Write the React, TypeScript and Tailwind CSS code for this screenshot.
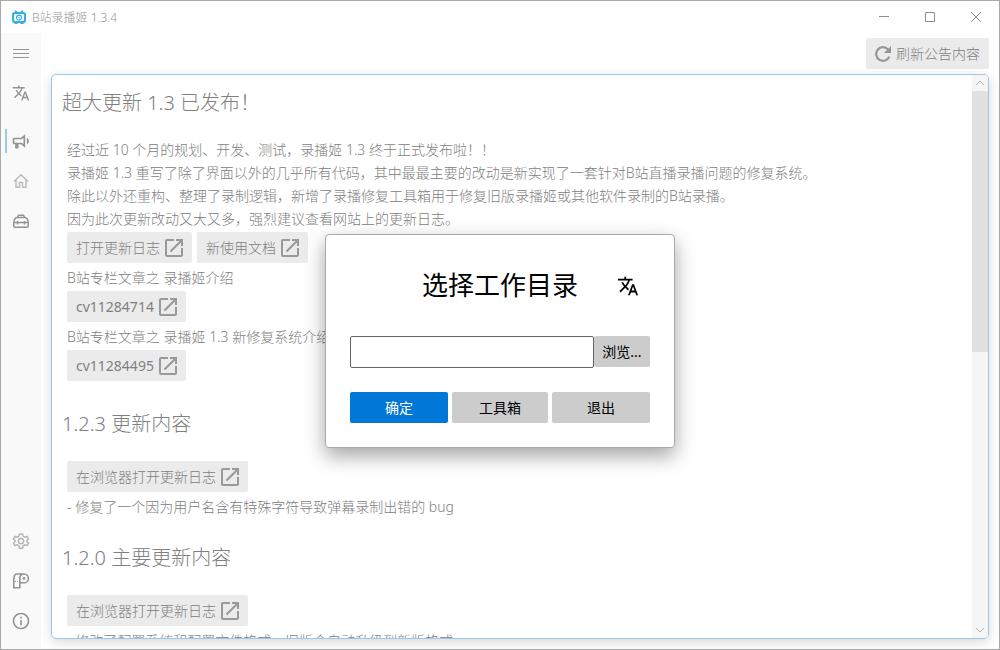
import type { ReactNode } from 'react';
import { MdOpenInNew, MdTranslate } from 'react-icons/md';

function Glyph({ d, className }: { d: string; className?: string }) {
  return (
    <svg viewBox="0 0 24 24" fill="currentColor" className={className ?? 'size-5'} aria-hidden="true">
      <path d={d} />
    </svg>
  );
}

const BULLHORN =
  'M12,8H4A2,2 0 0,0 2,10V14A2,2 0 0,0 4,16H5V20A1,1 0 0,0 6,21H8A1,1 0 0,0 9,20V16H12L17,20V4L12,8M15,15.6L13,14H4V10H13L15,8.4V15.6M21.5,12C21.5,13.71 20.54,15.26 19,16V8C20.53,8.75 21.5,10.3 21.5,12Z';
const INFO =
  'M11,9H13V7H11M12,20C7.59,20 4,16.41 4,12C4,7.59 7.59,4 12,4C16.41,4 20,7.59 20,12C20,16.41 16.41,20 12,20M12,2A10,10 0 0,0 2,12A10,10 0 0,0 12,22A10,10 0 0,0 22,12A10,10 0 0,0 12,2M11,17H13V11H11V17Z';

function Logo() {
  return (
    <svg viewBox="0 0 16 14" className="h-[14px] w-4" fill="none" stroke="#36ade6" aria-hidden="true">
      <rect x="2" y="3" width="12" height="9" rx="2" strokeWidth="2.2" />
      <path d="M4.5 1l2 1.8M11.5 1l-2 1.8M4 13.2h2M10 13.2h2" strokeWidth="1.5" strokeLinecap="round" />
      <circle cx="8" cy="7.6" r="2.5" strokeWidth="1.1" />
      <path d="M6.6 6.6l1.4 1.2h1" strokeWidth=".9" />
    </svg>
  );
}

function NavButton({ label, active, children }: { label: string; active?: boolean; children: ReactNode }) {
  return (
    <button type="button" aria-label={label} className="relative flex h-10 w-full items-center justify-center">
      {active && <span className="absolute left-1 h-6 w-[2px] bg-[#99c9ef]" />}
      {children}
    </button>
  );
}

function LinkButton({ children }: { children: ReactNode }) {
  return (
    <button type="button" className="flex h-[31px] items-center gap-[2px] rounded-xs bg-[#ebebeb] pr-[6px] pl-[9px]">
      {children}
      <MdOpenInNew className="size-6 text-[#999999]" />
    </button>
  );
}

function Row({ children }: { children: ReactNode }) {
  return <div className="flex gap-[5px] pt-[2px] pb-[3px]">{children}</div>;
}

function Announcements() {
  return (
    <article className="min-w-0 flex-1 overflow-hidden pt-[14px] pl-[10px] whitespace-nowrap">
      <h2 className="mb-[21px] text-[20px] leading-7 font-light">超大更新 1.3 已发布！</h2>
      <div className="pl-[5px]">
        <p>经过近 10 个月的规划、开发、测试，录播姬 1.3 终于正式发布啦！！</p>
        <p>录播姬 1.3 重写了除了界面以外的几乎所有代码，其中最最主要的改动是新实现了一套针对B站直播录播问题的修复系统。</p>
        <p>除此以外还重构、整理了录制逻辑，新增了录播修复工具箱用于修复旧版录播姬或其他软件录制的B站录播。</p>
        <p>因为此次更新改动又大又多，强烈建议查看网站上的更新日志。</p>
        <Row>
          <LinkButton>打开更新日志</LinkButton>
          <LinkButton>新使用文档</LinkButton>
        </Row>
        <p>B站专栏文章之 录播姬介绍</p>
        <Row>
          <LinkButton><span className="font-normal">cv11284714</span></LinkButton>
        </Row>
        <p>B站专栏文章之 录播姬 1.3 新修复系统介绍</p>
        <Row>
          <LinkButton><span className="font-normal">cv11284495</span></LinkButton>
        </Row>
      </div>

      <h2 className="mt-[26px] mb-[21px] text-[20px] leading-7 font-light">1.2.3 更新内容</h2>
      <div className="pl-[5px]">
        <Row>
          <LinkButton>在浏览器打开更新日志</LinkButton>
        </Row>
        <p>- 修复了一个因为用户名含有特殊字符导致弹幕录制出错的 bug</p>
      </div>

      <h2 className="mt-[26px] mb-[21px] text-[20px] leading-7 font-light">1.2.0 主要更新内容</h2>
      <div className="pl-[5px]">
        <Row>
          <LinkButton>在浏览器打开更新日志</LinkButton>
        </Row>
        <p>- 修改了配置系统和配置文件格式，旧版会自动升级到新版格式</p>
      </div>
    </article>
  );
}

function ScrollBar() {
  return (
    <div className="flex w-4 flex-col bg-[#f5f5f5] text-[#b5b5b5]" aria-hidden="true">
      <svg viewBox="0 0 16 16" className="size-4" fill="none" stroke="currentColor">
        <path d="M4 10l4-4 4 4" />
      </svg>
      <div className="h-[261px] bg-[#e1e1e1]" />
      <svg viewBox="0 0 16 16" className="mt-auto size-4" fill="none" stroke="currentColor">
        <path d="M4 6l4 4 4-4" />
      </svg>
    </div>
  );
}

function WorkDirDialog() {
  return (
    <div className="absolute inset-0 flex items-center justify-center">
      <form
        role="dialog"
        aria-labelledby="dialog-title"
        className="w-[350px] rounded-sm border border-[#aaaaaa] bg-white p-6 font-normal text-black shadow-[0_8px_20px_rgba(0,0,0,0.36)]"
      >
        <div className="mb-6 grid h-[53px] grid-cols-[1fr_auto_1fr] items-center">
          <h1 id="dialog-title" className="col-start-2 text-[26px]">选择工作目录</h1>
          <button type="button" aria-label="语言" className="justify-self-end pr-[11px]">
            <MdTranslate className="size-[22px]" />
          </button>
        </div>
        <div className="mb-6 flex items-start">
          <input
            type="text"
            aria-label="工作目录"
            className="h-8 min-w-0 flex-1 rounded-xs border border-[#666666] px-2 outline-none"
          />
          <button type="button" className="h-[31px] w-14 rounded-xs bg-[#cccccc]">浏览...</button>
        </div>
        <div className="grid grid-cols-[1fr_96px_1fr] gap-1">
          <button type="button" className="h-[31px] rounded-xs bg-[#0078d7] text-white">确定</button>
          <button type="button" className="h-[31px] rounded-xs bg-[#cccccc]">工具箱</button>
          <button type="button" className="h-[31px] rounded-xs bg-[#cccccc]">退出</button>
        </div>
      </form>
    </div>
  );
}

export default function App() {
  return (
    <div className="flex h-screen flex-col border border-[#a9a9a9] bg-white font-['Noto_Sans','Noto_Sans_CJK_SC',sans-serif] text-[14px] leading-[23px] font-light text-[#808080]">
      <header className="flex h-8 shrink-0 items-center pl-[10px]">
        <Logo />
        <span className="ml-[5px] text-[12px] text-[#989898]">B站录播姬 1.3.4</span>
        <div className="ml-auto flex text-[#8f8f8f]">
          <button type="button" aria-label="最小化" className="flex h-8 w-[46px] items-center justify-center">
            <svg viewBox="0 0 10 10" className="size-[10px]" stroke="currentColor"><path d="M0 4.5h10" /></svg>
          </button>
          <button type="button" aria-label="最大化" className="flex h-8 w-[46px] items-center justify-center">
            <svg viewBox="0 0 10 10" className="size-[10px]" fill="none" stroke="currentColor"><path d="M.5.5h9v9h-9z" /></svg>
          </button>
          <button type="button" aria-label="关闭" className="flex h-8 w-[46px] items-center justify-center">
            <svg viewBox="0 0 10 10" className="size-[10px]" stroke="currentColor"><path d="M0 0l10 10M10 0L0 10" /></svg>
          </button>
        </div>
      </header>

      <div className="relative flex min-h-0 flex-1">
        <nav className="flex w-10 shrink-0 flex-col bg-[#f9f9f9] text-[#949494]">
          <NavButton label="菜单">
            <svg viewBox="0 0 16 10" className="h-[10px] w-4" stroke="currentColor"><path d="M0 1.5h16M0 5.5h16M0 9.5h16" /></svg>
          </NavButton>
          <NavButton label="语言"><MdTranslate className="size-[18px]" /></NavButton>
          <div className="h-2" />
          <NavButton label="公告" active><Glyph d={BULLHORN} /></NavButton>
          <NavButton label="主页">
            <svg viewBox="0 0 16 16" className="size-4 text-[#bcbcbc]" fill="none" stroke="currentColor" strokeWidth="1.5">
              <path d="M1 8.5L8 1.8l7 6.7M3 7v7.3h3.5V9.5h3v4.8H13V7" />
            </svg>
          </NavButton>
          <NavButton label="工具箱">
            <svg viewBox="0 0 16 16" className="size-4" fill="none" stroke="currentColor" strokeWidth="1.5">
              <path d="M.8 9.6h14.4V13a1.2 1.2 0 0 1-1.2 1.2H2A1.2 1.2 0 0 1 .8 13zM.8 9.6C1 7 2.2 4.6 4.5 4.6h7c2.3 0 3.5 2.4 3.7 5" />
              <path d="M4.5 4.6l1-2.4h5l1 2.4M4.5 8v3.5M11.5 8v3.5" />
            </svg>
          </NavButton>
          <div className="flex-1" />
          <NavButton label="设置">
            <svg viewBox="0 0 24 24" className="size-[18px] text-[#b5b5b5]" fill="none" stroke="currentColor" strokeWidth="2">
              <circle cx="12" cy="12" r="3.5" />
              <path d="M10 2.5h4l.7 3L17 6.8l3-.9 2 3.4-2.2 2.1v1.2l2.2 2.1-2 3.4-3-.9-2.3 1.3-.7 3h-4l-.7-3L7 17.2l-3 .9-2-3.4 2.2-2.1v-1.2L2 9.300l2-3.400 3 .9 2.300-1.300z" />
            </svg>
          </NavButton>
          <NavButton label="赞助">
            <svg viewBox="0 0 16 16" className="size-4" fill="none" stroke="currentColor" strokeWidth="1.6">
              <path d="M11 1H4.5C2 1 .8 3 .8 6v8.700h6V5.400C6.800 2.800 8.600 1 11 1a4.300 4.300 0 1 1 0 8.800H6.800" />
              <path d="M2 8.5h4" strokeWidth="1" strokeDasharray="1 1" />
              <circle cx="11" cy="5.4" r="1.3" fill="currentColor" stroke="none" />
            </svg>
          </NavButton>
          <NavButton label="关于"><Glyph d={INFO} /></NavButton>
          <div className="h-2" />
        </nav>

        <main className="flex min-w-0 flex-1 flex-col p-[10px] pt-[5px]">
          <button
            type="button"
            className="mb-[5px] flex h-[31px] shrink-0 items-center gap-[5px] self-end rounded-xs bg-[#ebebeb] px-[9px]"
          >
            <svg viewBox="0 0 16 16" className="size-4 text-[#969696]" fill="none" stroke="currentColor" strokeWidth="2.2" aria-hidden="true">
              <path d="M14.3 10.6A6.8 6.8 0 1 1 13 3.4" />
              <path d="M16 0v7H9z" fill="currentColor" stroke="none" />
            </svg>
            刷新公告内容
          </button>
          <section className="flex min-h-0 flex-1 overflow-hidden rounded-[5px] border border-[#99c9ef] shadow-[0_3px_12px_rgba(0,0,0,0.16)]">
            <Announcements />
            <ScrollBar />
          </section>
        </main>

        <WorkDirDialog />
      </div>
    </div>
  );
}
